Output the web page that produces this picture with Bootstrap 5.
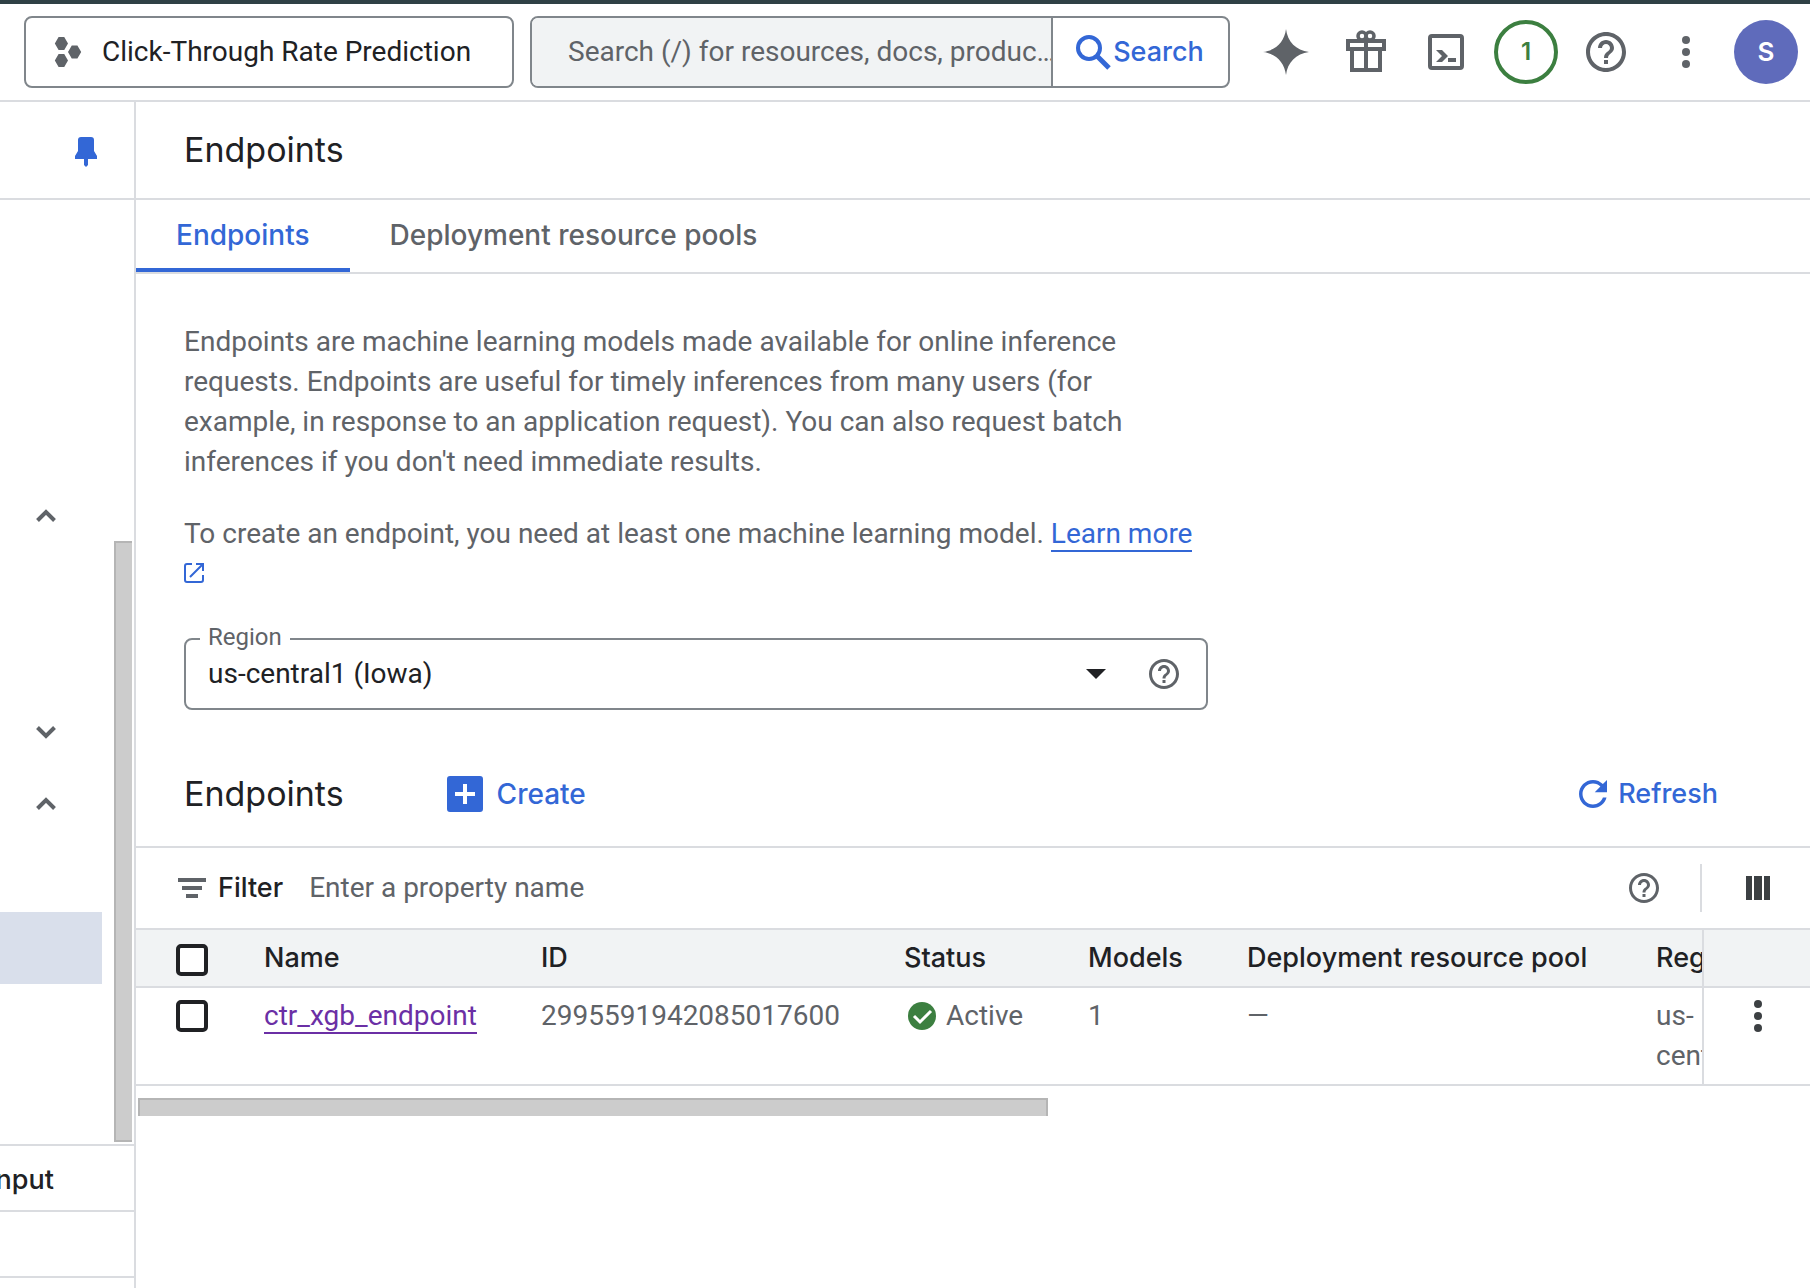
<!DOCTYPE html>
<html lang="en">
<head>
<meta charset="utf-8">
<meta name="viewport" content="width=device-width, initial-scale=1">
<title>Endpoints – Click-Through Rate Prediction</title>
<link rel="stylesheet" href="https://cdn.jsdelivr.net/npm/bootstrap@5.3.0/dist/css/bootstrap.min.css">
<style>
  :root {
    --line: #dadce0;
    --edge: #80868b;
    --ink: #202124;
    --muted: #5f6368;
    --blue: #3367d6;
    --shade: #f1f3f4;
  }
  body {
    font: 400 28px/40px Roboto, "Liberation Sans", sans-serif;
    color: var(--muted);
    background: #fff;
  }
  svg { display: block; fill: currentColor; flex: none; }
  button { background: none; border: 0; padding: 0; color: inherit; }
  .brand-font { font-family: Inter, "Liberation Sans", sans-serif; font-weight: 500; font-size: 27px; }
  .page-heading { font: 400 34px/44px Inter, "Liberation Sans", sans-serif; color: var(--ink); }
  .ink { color: var(--ink); }
  .soft-ink { color: #3c4043; }
  .blue { color: var(--blue); }

  /* top bar */
  .topbar { border-top: 4px solid #2f4145; border-bottom: 2px solid var(--line); height: 102px; padding-left: 24px; padding-right: 4px; }
  .project-btn { width: 490px; height: 72px; border: 2px solid var(--edge); border-radius: 8px; padding-left: 28px; gap: 20px; }
  .project-btn svg { width: 28px; height: 32px; }
  .search-box { height: 72px; border: 2px solid var(--edge); border-radius: 8px; overflow: hidden; margin-left: 16px; min-width: 300px; max-width: 700px; }
  .search-box input { background: var(--shade); border: 0; padding: 0 0 0 36px; min-width: 0; outline: 0; color: var(--ink); }
  .search-box input::placeholder, .filter-input::placeholder { color: var(--muted); opacity: 1; }
  .search-box button { width: 177px; border-left: 2px solid var(--edge); padding-right: 2px; gap: 2px; }
  .tool { width: 80px; height: 72px; }
  .ring { width: 64px; height: 64px; border: 4px solid #3c7f40; border-radius: 50%; color: #3c7f40; font-size: 24px; font-weight: 600; }
  .avatar { width: 64px; height: 64px; border-radius: 50%; background: #5f6bbb; color: #fff; font-size: 26px; font-weight: 600; }

  /* left navigation */
  .sidenav { width: 136px; border-right: 2px solid var(--line); }
  .pin-row, .title-row { height: 98px; border-bottom: 2px solid var(--line); }
  .pin-row { padding-right: 37px; padding-top: 4px; }
  .nav-scroll { height: 944px; }
  .nav-tree { width: 102px; padding-top: 280px; }
  .nav-slot { height: 72px; width: 102px; padding-left: 34px; }
  .nav-slot.current { background: #d9dfeb; }
  .vbar { width: 18px; height: 601px; margin: auto 2px 2px 0; background: #ccc; border: 2px solid #b5b5b5; border-right: 0; }
  .nav-foot { height: 66px; border-top: 2px solid var(--line); padding-right: 80px; padding-top: 4px; }

  /* main column */
  .title-row { padding-left: 48px; }
  .tab-row { height: 74px; border-bottom: 2px solid var(--line); }
  .tab-row a { padding: 2px 40px 0; font-size: 28px; color: var(--muted); text-decoration: none; border-bottom: 4px solid transparent; height: 72px; }
  .tab-row a.active { color: var(--blue); border-color: var(--blue); }
  .intro { padding: 48px 48px 0; max-width: 1120px; }
  .intro p { margin-bottom: 32px; }
  .ruled { text-decoration: none; border-bottom: 2px solid currentColor; }
  .visited { color: #6b2fa5; }
  .region-field { height: 72px; margin-top: 44px; border: 2px solid var(--edge); border-radius: 8px; padding-right: 27px; }
  .region-field label { position: absolute; left: 14px; top: -19px; padding: 0 8px; background: #fff; font-size: 24px; line-height: 32px; }
  .region-field select { appearance: none; border: 0; background: none; height: 68px; padding: 0 22px; color: var(--ink); outline: 0; }
  .caret { margin-right: 43px; color: var(--ink); }
  .list-head { height: 104px; margin-top: 32px; padding: 0 92px 0 48px; }
  .list-head .create { margin-left: 103px; gap: 14px; font-size: 28px; }
  .list-head .refresh { gap: 11px; }
  .filter-row { height: 84px; border-top: 2px solid var(--line); border-bottom: 2px solid var(--line); padding-left: 42px; }
  .filter-input { border: 0; padding: 0; outline: 0; margin-left: 26px; }
  .splitter { width: 2px; height: 48px; background: var(--line); margin-left: 41px; }
  .cols-btn { width: 108px; padding-left: 4px; }

  .ep-table { width: 100%; table-layout: fixed; border-collapse: separate; border-spacing: 0; }
  .ep-table th, .ep-table td { padding: 8px 0; vertical-align: top; overflow: hidden; border-bottom: 2px solid var(--line); }
  .ep-table thead th { background: var(--shade); color: var(--ink); height: 58px; font-weight: 500; white-space: nowrap; }
  .ep-table .pick { padding-left: 40px; }
  .ep-table .more { border-left: 2px solid var(--line); padding-left: 2px; }
  .box { appearance: none; display: block; width: 32px; height: 32px; border: 4px solid var(--ink); border-radius: 5px; margin: 4px 0; background: #fff; }
  thead .box { margin: 6px 0 2px; }
  .hbar { width: 910px; max-width: 100%; height: 18px; margin: 12px 0 0 2px; background: #ccc; border: 2px solid #b5b5b5; border-bottom: 0; }
</style>
<script src="https://cdn.jsdelivr.net/npm/bootstrap@5.3.0/dist/js/bootstrap.bundle.min.js"></script>
</head>
<body class="d-flex flex-column min-vh-100">

<svg width="0" height="0" class="position-absolute" aria-hidden="true">
  <symbol id="i-help" viewBox="2 2 20 20"><path d="M11 18h2v-2h-2v2zm1-16C6.480 2 2 6.480 2 12s4.480 10 10 10 10-4.480 10-10S17.520 2 12 2zm0 18c-4.410 0-8-3.590-8-8s3.590-8 8-8 8 3.590 8 8-3.590 8-8 8zm0-14c-2.210 0-4 1.790-4 4h2c0-1.100.9-2 2-2s2 .9 2 2c0 2-3 1.750-3 5h2c0-2.250 3-2.500 3-5 0-2.210-1.790-4-4-4z"/></symbol>
  <symbol id="i-dots" viewBox="0 0 8 32"><circle cx="4" cy="4" r="4"/><circle cx="4" cy="16" r="4"/><circle cx="4" cy="28" r="4"/></symbol>
  <symbol id="i-up" viewBox="0 0 22 14"><path d="M2.500 11.500 11 3l8.500 8.500" fill="none" stroke="currentColor" stroke-width="4"/></symbol>
</svg>

<header class="topbar d-flex align-items-center">
  <button type="button" class="project-btn d-flex align-items-center flex-shrink-0">
    <svg viewBox="0 0 28 34"><path d="M4 1h6l4 7-4 7H4L0 8zM4 19h6l4 7-4 7H4l-4-7zM18 10h6l4 7-4 7h-6l-4-7z"/></svg>
    <span class="ink">Click-Through Rate Prediction</span>
  </button>
  <form class="search-box d-flex flex-grow-1" role="search">
    <input type="text" class="flex-grow-1" aria-label="Search" placeholder="Search (/) for resources, docs, produc…">
    <button type="button" class="brand-font blue d-flex align-items-center justify-content-center flex-shrink-0">
      <svg width="36" height="36" viewBox="0 0 36 36"><g fill="none" stroke="currentColor" stroke-width="4"><circle cx="14" cy="14" r="11"/><path d="m22 22 12 12" stroke-width="5"/></g></svg>
      Search
    </button>
  </form>
  <div class="d-flex align-items-center ms-auto flex-shrink-0">
    <button type="button" class="tool d-flex align-items-center justify-content-center" aria-label="Assistant">
      <svg width="46" height="46" viewBox="0 0 46 46"><path d="M23 0c1.500 12.500 10 21.500 23 23-13 1.500-21.500 10.500-23 23C21.500 33.500 13 24.500 0 23 13 21.500 21.500 12.500 23 0z"/></svg>
    </button>
    <button type="button" class="tool d-flex align-items-center justify-content-center" aria-label="Offers">
      <svg width="40" height="44" viewBox="0 0 40 44"><g fill="none" stroke="currentColor" stroke-width="4"><path d="M2 11h36v8H2zM6 19h28v21H6zM20 9v31"/><circle cx="16" cy="6" r="4" stroke-width="3.500"/><circle cx="24" cy="6" r="4" stroke-width="3.500"/></g></svg>
    </button>
    <button type="button" class="tool d-flex align-items-center justify-content-center" aria-label="Cloud Shell">
      <svg width="36" height="36" viewBox="0 0 36 36"><rect x="2" y="2" width="32" height="32" rx="2" fill="none" stroke="currentColor" stroke-width="4"/><path d="M8 16h6l6 6-6 6H8l6-6zM20 24h8v4h-8z"/></svg>
    </button>
    <button type="button" class="tool d-flex align-items-center justify-content-center" aria-label="Notifications">
      <span class="ring brand-font d-flex align-items-center justify-content-center">1</span>
    </button>
    <button type="button" class="tool d-flex align-items-center justify-content-center" aria-label="Help">
      <svg width="40" height="40"><use href="#i-help"/></svg>
    </button>
    <button type="button" class="tool d-flex align-items-center justify-content-center" aria-label="More options">
      <svg width="8" height="32"><use href="#i-dots"/></svg>
    </button>
    <button type="button" class="tool d-flex align-items-center justify-content-center" aria-label="Account">
      <span class="avatar brand-font d-flex align-items-center justify-content-center">S</span>
    </button>
  </div>
</header>

<div class="d-flex flex-grow-1">
  <nav class="sidenav flex-shrink-0 overflow-hidden" aria-label="Vertex AI">
    <div class="pin-row d-flex align-items-center justify-content-end">
      <button type="button" class="blue" aria-label="Unpin navigation">
        <svg width="22" height="30" viewBox="0 0 22 30"><path d="M6 0h10q3 0 3 3v11l3 5v3H0v-3l3-5V3q0-3 3-3zM9 22h4v6l-2 2-2-2z"/></svg>
      </button>
    </div>
    <div class="nav-scroll d-flex justify-content-between">
      <div class="nav-tree">
        <button type="button" class="nav-slot d-flex align-items-center" aria-label="Collapse section"><svg width="24" height="14"><use href="#i-up"/></svg></button>
        <div class="nav-slot"></div>
        <div class="nav-slot"></div>
        <button type="button" class="nav-slot d-flex align-items-center" aria-label="Expand section"><svg width="24" height="14" viewBox="0 0 22 14"><path d="M2.500 2.500 11 11l8.500-8.500" fill="none" stroke="currentColor" stroke-width="4"/></svg></button>
        <button type="button" class="nav-slot d-flex align-items-center" aria-label="Collapse section"><svg width="24" height="14"><use href="#i-up"/></svg></button>
        <div class="nav-slot"></div>
        <div class="nav-slot current"></div>
      </div>
      <div class="vbar"></div>
    </div>
    <div class="nav-foot brand-font ink d-flex align-items-center justify-content-end">Input</div>
    <div class="nav-foot"></div>
    <div class="nav-foot"></div>
  </nav>

  <main class="flex-grow-1 overflow-hidden">
    <div class="title-row d-flex align-items-center"><h1 class="page-heading m-0">Endpoints</h1></div>
    <div class="tab-row d-flex">
      <a href="#" class="brand-font active d-flex align-items-center">Endpoints</a>
      <a href="#" class="brand-font d-flex align-items-center">Deployment resource pools</a>
    </div>

    <section class="intro">
      <p>Endpoints are machine learning models made available for online inference requests. Endpoints are useful for timely inferences from many users (for example, in response to an application request). You can also request batch inferences if you don't need immediate results.</p>
      <p>To create an endpoint, you need at least one machine learning model. <a href="#" class="blue text-decoration-none"><span class="ruled">Learn more</span>
        <svg class="d-inline-block align-baseline" width="20" height="20" viewBox="0 0 20 20"><g fill="none" stroke="currentColor" stroke-width="2"><path d="M8 1H3Q1 1 1 3v14q0 2 2 2h14q2 0 2-2v-5M12 1h7v7M19 1 6 14"/></g></svg></a></p>
      <div class="region-field position-relative d-flex align-items-center">
        <label for="region">Region</label>
        <select id="region" class="flex-grow-1"><option>us-central1 (Iowa)</option></select>
        <svg class="caret" width="20" height="10" viewBox="0 0 20 10"><path d="M0 0h20L10 10z"/></svg>
        <button type="button" aria-label="Region help"><svg width="30" height="30"><use href="#i-help"/></svg></button>
      </div>
    </section>

    <div class="list-head d-flex align-items-center">
      <h2 class="page-heading m-0">Endpoints</h2>
      <button type="button" class="create brand-font blue d-flex align-items-center">
        <svg width="36" height="36" viewBox="0 0 36 36"><path fill-rule="evenodd" d="M3 0h30q3 0 3 3v30q0 3-3 3H3q-3 0-3-3V3q0-3 3-3zm13 8v8H8v4h8v8h4v-8h8v-4h-8V8z"/></svg>
        Create
      </button>
      <button type="button" class="refresh brand-font blue d-flex align-items-center ms-auto">
        <svg width="28" height="28" viewBox="4 4 16 16"><path d="M17.650 6.350C16.200 4.900 14.210 4 12 4c-4.420 0-7.990 3.580-7.990 8s3.570 8 7.990 8c3.730 0 6.840-2.550 7.730-6h-2.080c-.82 2.330-3.040 4-5.650 4-3.310 0-6-2.690-6-6s2.690-6 6-6c1.660 0 3.140.69 4.220 1.780L13 11h7V4l-2.350 2.350z"/></svg>
        Refresh
      </button>
    </div>

    <div class="filter-row d-flex align-items-center">
      <svg width="28" height="20" viewBox="0 0 28 20"><path d="M0 0h28v4H0zM4 8h20v4H4zM8 16h12v4H8z"/></svg>
      <label for="filter" class="brand-font ink ms-2 ps-1">Filter</label>
      <input id="filter" class="filter-input flex-grow-1" type="text" placeholder="Enter a property name">
      <button type="button" aria-label="Filter help"><svg width="30" height="30"><use href="#i-help"/></svg></button>
      <div class="splitter"></div>
      <button type="button" class="cols-btn soft-ink d-flex justify-content-center" aria-label="Column display options">
        <svg width="24" height="24" viewBox="0 0 24 24"><path d="M0 0h6v24H0zM8 0h8v24H8zM18 0h6v24h-6z"/></svg>
      </button>
    </div>

    <table class="ep-table">
      <colgroup>
        <col style="width:128px"><col style="width:277px"><col style="width:363px"><col style="width:184px"><col style="width:159px"><col style="width:409px"><col><col style="width:108px">
      </colgroup>
      <thead>
        <tr class="brand-font">
          <th class="pick"><input type="checkbox" class="box" aria-label="Select all endpoints"></th>
          <th>Name</th><th>ID</th><th>Status</th><th>Models</th><th>Deployment resource pool</th><th>Region</th>
          <th class="more"></th>
        </tr>
      </thead>
      <tbody>
        <tr>
          <td class="pick"><input type="checkbox" class="box" aria-label="Select ctr_xgb_endpoint"></td>
          <td><a href="#" class="ruled visited">ctr_xgb_endpoint</a></td>
          <td>2995591942085017600</td>
          <td>
            <div class="d-flex align-items-center">
              <svg class="ms-1 me-2" width="30" height="30" viewBox="0 0 30 30"><circle cx="14" cy="15" r="14" fill="#3c7f40"/><path d="m6 15 6 6L23 10" fill="none" stroke="#fff" stroke-width="3"/></svg>Active
            </div>
          </td>
          <td>1</td>
          <td>—</td>
          <td>us-central1</td>
          <td class="more"><button type="button" class="d-flex align-items-center justify-content-center w-100 soft-ink" aria-label="Endpoint actions"><svg class="my-1" width="8" height="32"><use href="#i-dots"/></svg></button></td>
        </tr>
      </tbody>
    </table>
    <div class="hbar"></div>
  </main>
</div>
</body>
</html>
